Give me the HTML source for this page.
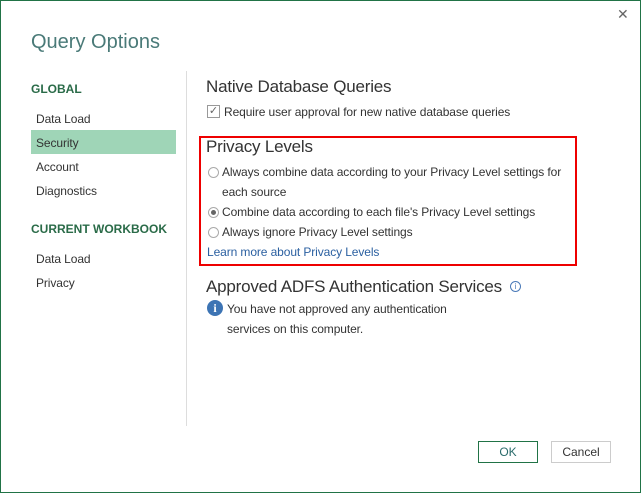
<!DOCTYPE html>
<html><head><style>
body{margin:0;width:641px;height:493px;overflow:hidden;background:#fff;font-family:"Liberation Sans",sans-serif;}
.win{position:absolute;left:0;top:0;width:639px;height:491px;border:1px solid #217346;}
.a{position:absolute;white-space:nowrap;}
.t{font-size:12px;color:#333;letter-spacing:-0.1px;}
.h{font-size:17px;color:#333;letter-spacing:-0.2px;}
.radio{position:absolute;width:9px;height:9px;border:1px solid #aaa;border-radius:50%;background:#fff;}
</style></head><body>
<div class="win"></div>
<div class="a" style="left:617px;top:6px;font-size:14px;color:#666">✕</div>
<div class="a" style="left:31px;top:31px;font-size:20px;color:#4a7a78">Query Options</div>
<div class="a" style="left:186px;top:71px;width:1px;height:355px;background:#ddd"></div>
<div class="a" style="left:31px;top:82px;font-size:12px;font-weight:bold;color:#2a6b48">GLOBAL</div>
<div class="a t" style="left:36px;top:112px">Data Load</div>
<div class="a" style="left:31px;top:130px;width:145px;height:24px;background:#9fd5b7"></div>
<div class="a t" style="left:36px;top:136px">Security</div>
<div class="a t" style="left:36px;top:160px">Account</div>
<div class="a t" style="left:36px;top:184px">Diagnostics</div>
<div class="a" style="left:31px;top:222px;font-size:12px;font-weight:bold;color:#2a6b48">CURRENT WORKBOOK</div>
<div class="a t" style="left:36px;top:252px">Data Load</div>
<div class="a t" style="left:36px;top:276px">Privacy</div>

<div class="a h" style="left:206px;top:77px">Native Database Queries</div>
<div class="a" style="left:207px;top:105px;width:11px;height:11px;border:1px solid #999;font-size:11px;line-height:11px;text-align:center;color:#666">✓</div>
<div class="a t" style="left:224px;top:105px">Require user approval for new native database queries</div>

<div class="a" style="left:199px;top:136px;width:374px;height:126px;border:2px solid #e00"></div>
<div class="a h" style="left:206px;top:137px">Privacy Levels</div>
<div class="radio" style="left:208px;top:167px"></div>
<div class="a t" style="left:222px;top:165px">Always combine data according to your Privacy Level settings for</div>
<div class="a t" style="left:222px;top:185px">each source</div>
<div class="radio" style="left:208px;top:207px"></div><div class="a" style="left:211px;top:210px;width:5px;height:5px;border-radius:50%;background:#666"></div>
<div class="a t" style="left:222px;top:205px">Combine data according to each file's Privacy Level settings</div>
<div class="radio" style="left:208px;top:227px"></div>
<div class="a t" style="left:222px;top:225px">Always ignore Privacy Level settings</div>
<div class="a t" style="left:207px;top:245px;color:#2a5fa0">Learn more about Privacy Levels</div>

<div class="a h" style="left:206px;top:277px">Approved ADFS Authentication Services</div>
<div class="a" style="left:510px;top:281px;width:9px;height:9px;border:1px solid #4a7ab8;border-radius:50%;font-size:8px;line-height:9px;text-align:center;color:#4a7ab8">i</div>
<div class="a" style="left:207px;top:300px;width:16px;height:16px;border-radius:50%;background:#3d74b4;color:#fff;font-size:12px;font-weight:bold;line-height:16px;text-align:center;font-family:'Liberation Serif',serif">i</div>
<div class="a t" style="left:227px;top:302px">You have not approved any authentication</div>
<div class="a t" style="left:227px;top:322px">services on this computer.</div>

<div class="a" style="left:478px;top:441px;width:58px;height:20px;border:1px solid #217346;font-size:12px;line-height:20px;text-align:center;color:#2a6b6b">OK</div>
<div class="a" style="left:551px;top:441px;width:58px;height:20px;border:1px solid #ccc;font-size:12px;line-height:20px;text-align:center;color:#333">Cancel</div>
</body></html>
